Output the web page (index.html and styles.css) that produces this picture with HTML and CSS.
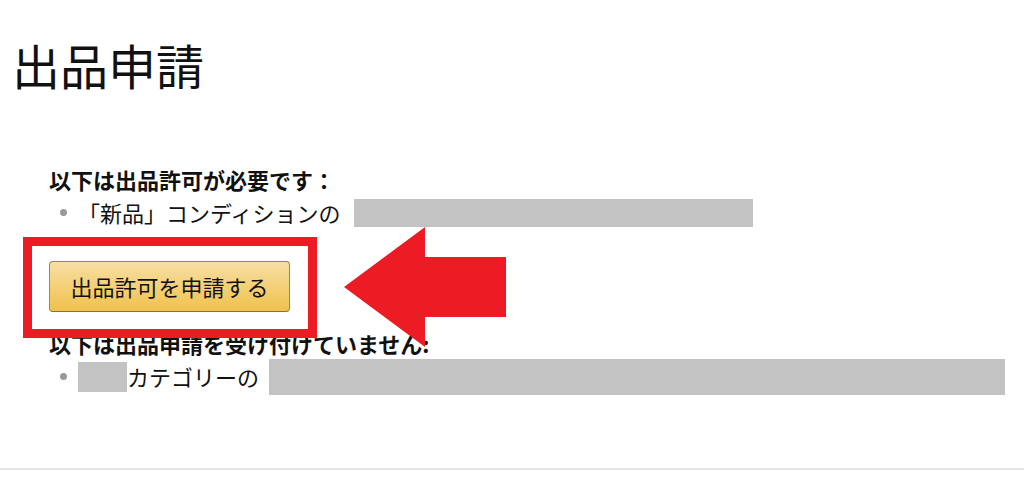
FILE: index.html
```html
<!DOCTYPE html>
<html lang="ja">
<head>
    <meta charset="UTF-8">
    <meta name="viewport" content="width=device-width, initial-scale=1.0">
    <title>出品申請</title>
    <link rel="stylesheet" href="styles.css">
</head>
<body>
    <div class="page">
        <h1 class="page-title">出品申請</h1>

        <div class="content">
            <h3 class="section-title">以下は出品許可が必要です：</h3>
            <ul class="items">
                <li><span>「新品」コンディションの</span><span class="redact redact-a"></span></li>
            </ul>

            <div class="actions">
                <button type="button" class="apply-btn">出品許可を申請する</button>
            </div>

            <h3 class="section-title">以下は出品申請を受け付けていません:</h3>
            <ul class="items">
                <li><span class="redact redact-b"></span><span>カテゴリーの</span><span class="redact redact-c"></span></li>
            </ul>
        </div>

        <!-- annotation overlay -->
        <div class="highlight"></div>
        <svg class="arrow" width="163" height="121" viewBox="0 0 163 121">
            <polygon points="0,60 81,0 81,30 162,30 162,90 81,90 81,120" fill="#ed1c24"/>
        </svg>
    </div>
</body>
</html>
```

FILE: styles.css
```css
body {
    margin: 0;
    padding: 0;
    background: #fff;
    color: #111;
    font-family: "Noto Sans CJK JP", "Noto Sans", sans-serif;
}

.page {
    position: relative;
    width: 1024px;
    padding-top: 35px;
}

.page-title {
    margin: 0;
    padding-left: 12px;
    font-size: 48px;
    font-weight: 400;
    line-height: 58px;
    color: #111;
}

.content {
    padding: 70px 0 75px 49px;
    border-bottom: 2px solid #e6e6e6;
}

.section-title {
    margin: 0;
    font-size: 22px;
    font-weight: bold;
    line-height: 33px;
}

.items {
    list-style: none;
    margin: 0;
    padding: 0;
}

.items li {
    display: flex;
    align-items: center;
    height: 33px;
    font-size: 22px;
    line-height: 33px;
    white-space: nowrap;
}

.items li::before {
    content: "";
    width: 7px;
    height: 7px;
    border-radius: 50%;
    background: #999;
    margin-left: 11px;
    margin-right: 11px;
    flex: none;
}

.redact {
    display: block;
    background: #c3c3c3;
    flex: none;
}

.redact-a {
    width: 399px;
    height: 28px;
    margin-left: 14px;
}

.redact-b {
    width: 49px;
    height: 30px;
}

.redact-c {
    width: 736px;
    height: 36px;
    margin-left: 10px;
}

.actions {
    padding-top: 32px;
    padding-bottom: 15px;
}

.apply-btn {
    display: block;
    box-sizing: border-box;
    width: 241px;
    height: 51px;
    padding: 0;
    border: 1px solid #a88734;
    border-bottom-color: #8d712c;
    border-radius: 4px;
    background: linear-gradient(to bottom, #f7dfa5, #f0c14b);
    color: #111;
    font-family: inherit;
    font-size: 22px;
    line-height: 49px;
    cursor: pointer;
}

.highlight {
    position: absolute;
    left: 23px;
    top: 237px;
    width: 294px;
    height: 101px;
    box-sizing: border-box;
    border: 9px solid #ed1c24;
}

.arrow {
    position: absolute;
    left: 344px;
    top: 227px;
}
```
